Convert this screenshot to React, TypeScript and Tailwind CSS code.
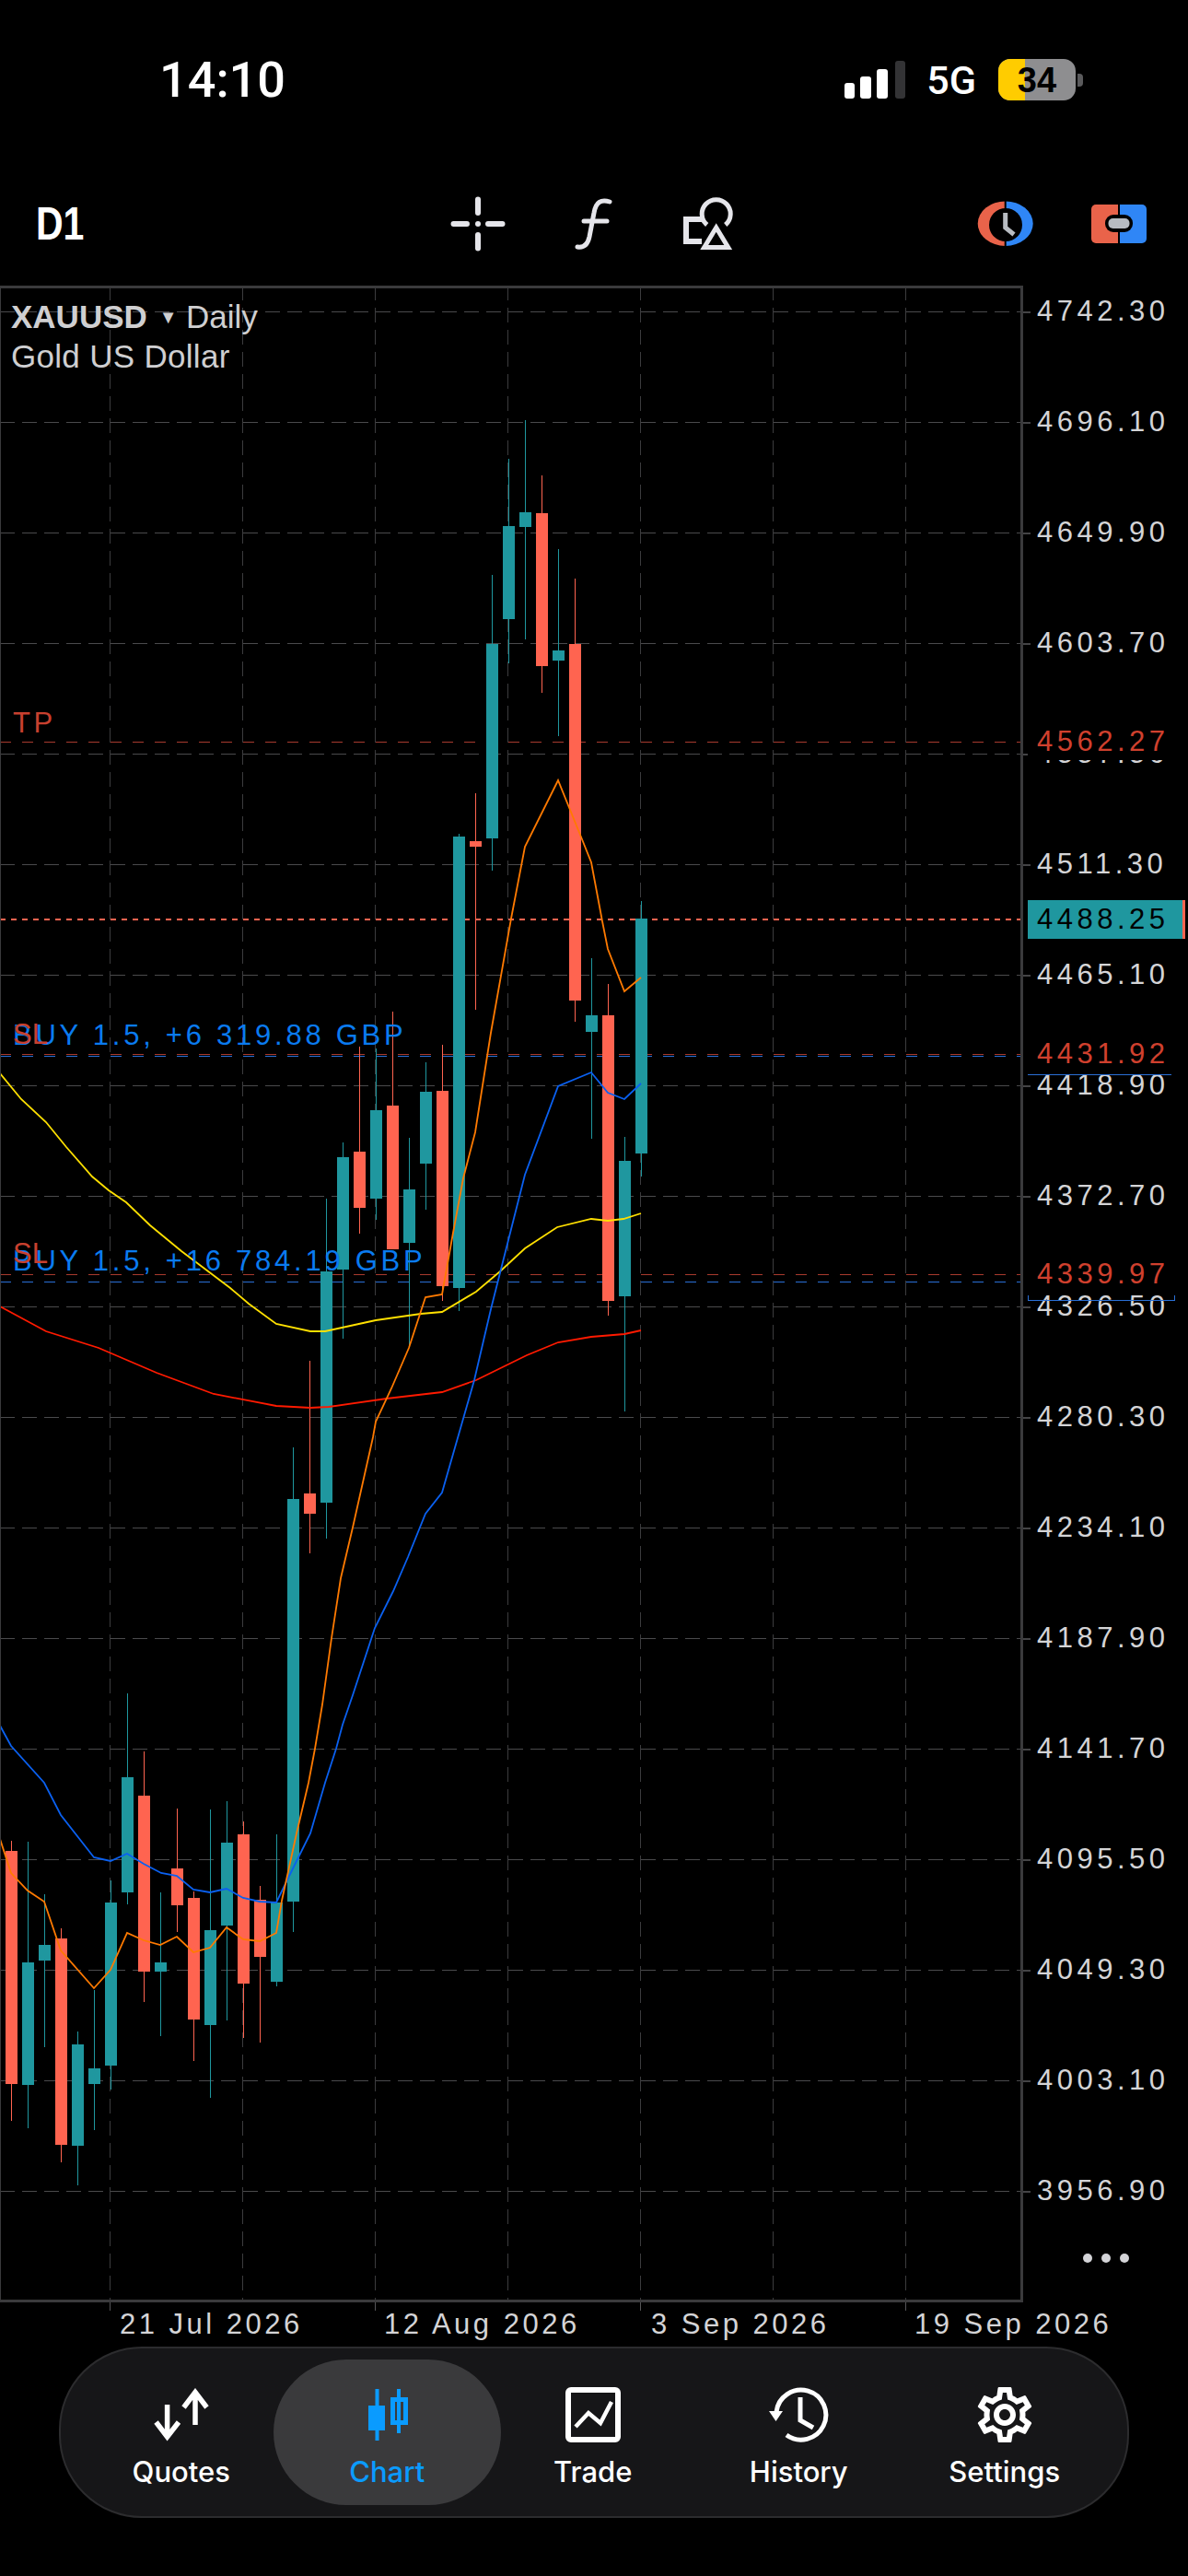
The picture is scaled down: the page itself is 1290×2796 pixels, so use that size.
import React from 'react';
import { MdOutlineSettings } from 'react-icons/md';

// all chart coordinates are page pixels; the plot starts at y = 310
const TOP = 310;
const TEAL = '#1f979f';
const RED = '#ff6450';

const PRICES = ['4742.30', '4696.10', '4649.90', '4603.70', '4557.50', '4511.30', '4465.10', '4418.90', '4372.70', '4326.50', '4280.30', '4234.10', '4187.90', '4141.70', '4095.50', '4049.30', '4003.10', '3956.90'];
const TIME_TICKS = [119, 407, 695, 983];
const GRID_X = [119, 263, 407, 551, 695, 839, 983];

// wick top, body top, body bottom, wick bottom, up
const CANDLES: [number, number, number, number, boolean][] = [
  [1998, 2009, 2262, 2302, false],
  [1999, 2130, 2263, 2310, true],
  [2056, 2111, 2128, 2222, true],
  [2093, 2104, 2328, 2347, false],
  [2205, 2219, 2329, 2372, true],
  [2160, 2245, 2262, 2312, true],
  [2041, 2065, 2242, 2268, true],
  [1838, 1929, 2054, 2067, true],
  [1901, 1949, 2140, 2173, false],
  [2054, 2130, 2140, 2210, true],
  [1963, 2028, 2068, 2097, false],
  [2053, 2060, 2192, 2237, false],
  [1964, 2095, 2198, 2277, true],
  [1955, 2000, 2090, 2193, true],
  [1977, 1991, 2153, 2212, false],
  [2047, 2062, 2124, 2217, false],
  [1991, 2065, 2151, 2156, true],
  [1571, 1627, 2064, 2097, true],
  [1477, 1621, 1643, 1686, false],
  [1301, 1380, 1631, 1670, true],
  [1240, 1256, 1378, 1453, true],
  [1136, 1250, 1311, 1339, false],
  [1138, 1205, 1301, 1324, true],
  [1098, 1200, 1356, 1356, false],
  [1235, 1291, 1349, 1461, true],
  [1153, 1185, 1263, 1313, true],
  [1134, 1184, 1396, 1412, false],
  [905, 908, 1398, 1423, true],
  [861, 913, 919, 1096, false],
  [624, 699, 910, 945, true],
  [498, 571, 672, 720, true],
  [456, 556, 572, 694, true],
  [516, 557, 723, 752, false],
  [596, 706, 717, 799, true],
  [628, 699, 1086, 1109, false],
  [1040, 1102, 1120, 1236, true],
  [1068, 1102, 1412, 1428, false],
  [1234, 1260, 1407, 1532, true],
  [978, 997, 1252, 1277, true],
];

const ORANGE_MA = '0,1996 12,2033 30,2052 48,2064 66,2117 102,2158 120,2138 138,2098 156,2106 174,2111 192,2102 210,2119 228,2114 246,2092 264,2105 282,2107 300,2098 306,2063 322,1990 335,1935 342,1898 350,1850 360,1778 370,1713 383,1658 405,1560 408,1543 425,1507 444,1463 462,1408 480,1405 492,1338 503,1279 516,1229 533,1121 555,997 570,919 606,847 632,911 642,936 654,1000 660,1030 678,1076 696,1061';
const BLUE_MA = '0,1873 12,1895 48,1935 66,1970 102,2016 120,2020 138,2012 156,2023 175,2033 192,2036 210,2051 228,2054 246,2050 264,2060 282,2064 300,2065 322,2020 337,1990 353,1935 365,1898 372,1872 383,1840 407,1767 427,1727 443,1690 462,1643 480,1620 515,1498 533,1421 570,1275 606,1179 642,1164 660,1186 678,1193 696,1176';
const YELLOW_MA = '0,1165 23,1193 50,1218 72,1245 100,1277 118,1292 137,1305 163,1330 197,1358 250,1398 270,1415 300,1437 337,1445 353,1445 408,1433 457,1426 480,1424 517,1402 543,1380 570,1355 605,1332 642,1323 660,1325 677,1323 696,1317';
const RED_MA = '0,1418 50,1445 107,1463 170,1490 232,1513 300,1526 337,1528 357,1527 420,1518 480,1511 517,1498 572,1471 606,1457 642,1451 678,1448 696,1444';

const StatusBar = () => (
  <div className="flex h-[176px] shrink-0 items-start justify-between pl-[173px] pr-[114px] pt-[60px] text-white">
    <span className="font-['Roboto',sans-serif] text-[54px] leading-[54px] font-medium">14:10</span>
    <div className="flex items-center pt-[4px]">
      <div className="flex h-[41px] items-end gap-[6px]">
        <div className="h-[17px] w-[11px] rounded-[3px] bg-white" />
        <div className="h-[24px] w-[12px] rounded-[3px] bg-white" />
        <div className="h-[32px] w-[12px] rounded-[3px] bg-white" />
        <div className="ml-[2px] h-[41px] w-[11px] rounded-[3px] bg-[#333335]" />
      </div>
      <span className="ml-[23px] font-['Roboto',sans-serif] text-[43px] leading-[44px] font-medium">5G</span>
      <div className="relative ml-[24px] flex h-[45px] w-[84px] items-center justify-center overflow-hidden rounded-[13px] bg-[#8e8e90]">
        <div className="absolute inset-y-0 left-0 w-[29px] bg-[#ffcc00]" />
        <span className="relative text-[38px] leading-[40px] font-bold text-black">34</span>
      </div>
      <div className="ml-[2px] h-[14px] w-[6px] rounded-r-[4px] bg-[#5a5a5c]" />
    </div>
  </div>
);

const Toolbar = () => (
  <div className="relative flex h-[134px] shrink-0 items-center text-[#e5e5ea]">
    <span className="ml-[39px] w-[449px] origin-left scale-x-[0.82] text-[50px] leading-[50px] font-bold text-white">D1</span>
    <svg width="62" height="62" viewBox="0 0 62 62" className="shrink-0" stroke="#e5e5ea" strokeWidth="6" strokeLinecap="round" fill="none">
      <path d="M4.5 31H19M42 31H57.5M31 4.5V19M31 43V57.5" />
      <circle cx="31" cy="31" r="3" fill="#e5e5ea" stroke="none" />
    </svg>
    <svg width="50" height="64" viewBox="0 0 50 64" className="ml-[70px] shrink-0" stroke="#e5e5ea" strokeWidth="5" strokeLinecap="round" fill="none">
      <path d="M42 8C33 5 27 8 25 20L20 46C18 55 13 58 7 57" />
      <path d="M14 29H39" />
    </svg>
    <svg width="60" height="64" viewBox="0 0 60 64" className="ml-[70px] shrink-0" stroke="#e5e5ea" fill="none">
      <path d="M22 27H5V51H22" strokeWidth="6" />
      <path d="M27.7 33A15.5 15.5 0 1 1 47.7 33" strokeWidth="5" />
      <path d="M37.7 36L50.7 57.5H24.7Z" strokeWidth="5" />
    </svg>
    <svg width="64" height="54" viewBox="0 0 64 54" className="ml-[260px] shrink-0">
      <path d="M31.7 2.5A30 24.2 0 0 0 31.7 50.9Z" fill="#e9634a" />
      <path d="M31.7 2.5A30 24.2 0 0 1 31.7 50.9Z" fill="#2f86f6" />
      <circle cx="32" cy="28" r="18" fill="#000" />
      <rect x="30.7" y="0" width="2" height="54" fill="#000" />
      <path d="M31.7 15V31L41 38.5" fill="none" stroke="#b8bcc2" strokeWidth="5" />
    </svg>
    <svg width="60" height="42" viewBox="0 0 60 42" className="ml-[61px] shrink-0">
      <path d="M30 0H5A5 5 0 0 0 0 5V37A5 5 0 0 0 5 42H30Z" fill="#e9634a" />
      <path d="M30 0H55A5 5 0 0 1 60 5V37A5 5 0 0 1 55 42H30Z" fill="#2f86f6" />
      <rect x="29" y="0" width="2" height="42" fill="#000" />
      <rect x="15" y="11" width="30" height="19" rx="9" fill="#000" />
      <rect x="18.5" y="15" width="23" height="11" rx="5" fill="#b8bcc2" />
    </svg>
  </div>
);

const Plot = () => (
  <svg className="absolute inset-0" width="1111" height="2189" viewBox={`0 ${TOP} 1111 2189`} fill="none">
    {PRICES.map((p, i) => (
      <line key={p} x1="0" x2="1110" y1={338.5 + i * 120} y2={338.5 + i * 120} stroke="#4a4a4c" strokeWidth="1" strokeDasharray="16 8" />
    ))}
    {GRID_X.map((x) => (
      <line key={x} x1={x + 0.5} x2={x + 0.5} y1={TOP} y2={2499} stroke="#3c3c3e" strokeWidth="1" strokeDasharray="16 8" />
    ))}

    {/* order and stop levels */}
    <line x1="0" x2="1110" y1="805.5" y2="805.5" stroke="#a83a2e" strokeDasharray="12 12" />
    <line x1="0" x2="1110" y1="1144.5" y2="1144.5" stroke="#a83a2e" strokeDasharray="12 12" />
    <line x1="0" x2="1110" y1="1146.5" y2="1146.5" stroke="#2a6fd6" strokeDasharray="12 12" />
    <line x1="0" x2="1110" y1="1383.5" y2="1383.5" stroke="#a83a2e" strokeDasharray="12 12" />
    <line x1="0" x2="1110" y1="1391.5" y2="1391.5" stroke="#2a6fd6" strokeDasharray="12 12" />
    <line x1="0" x2="1110" y1="998" y2="998" stroke={RED} strokeWidth="2" strokeDasharray="6 6" />

    {CANDLES.map(([high, top, bottom, low, up], i) => (
      <g key={i} fill={up ? TEAL : RED}>
        <rect x={12 + i * 18} y={high} width="1" height={low - high} />
        <rect x={6 + i * 18} y={top} width="13" height={bottom - top} />
      </g>
    ))}

    <polyline points={RED_MA} stroke="#ff1a00" strokeWidth="1.8" />
    <polyline points={YELLOW_MA} stroke="#ffe000" strokeWidth="1.8" />
    <polyline points={BLUE_MA} stroke="#0a60f0" strokeWidth="1.8" />
    <polyline points={ORANGE_MA} stroke="#ff7a00" strokeWidth="1.8" />
  </svg>
);

const ChartLabel = ({ y, className, children }: { y: number; className: string; children: React.ReactNode }) => (
  <span className={`absolute left-[14px] -translate-y-1/2 text-[31px] leading-[36px] whitespace-nowrap ${className}`} style={{ top: y - TOP }}>
    {children}
  </span>
);

const Chart = () => (
  <div className="relative h-[2189px] w-[1111px] shrink-0 overflow-hidden">
    <Plot />
    <div className="absolute inset-0 border-y-[3px] border-r-[3px] border-l border-[#3a3a3c]" />
    <div className="absolute left-[12px] top-[12px] text-[35px] leading-[43px] tracking-[0.3px] text-[#cfcfd1]">
      <div className="flex items-center">
        <span className="font-bold tracking-normal">XAUUSD</span>
        <span className="ml-[13px] mr-[9px] text-[20px] leading-[30px]">▼</span>
        <span className="tracking-normal">Daily</span>
      </div>
      <div>Gold US Dollar</div>
    </div>
    <ChartLabel y={785} className="tracking-[3.5px] text-[#c8402f]">TP</ChartLabel>
    <ChartLabel y={1124} className="tracking-[3.75px] text-[#0a7bf0]">BUY 1.5, +6 319.88 GBP</ChartLabel>
    <ChartLabel y={1123} className="text-[#c8402f]">SL</ChartLabel>
    <ChartLabel y={1369} className="tracking-[3.75px] text-[#0a7bf0]">BUY 1.5, +16 784.19 GBP</ChartLabel>
    <ChartLabel y={1361} className="text-[#c8402f]">SL</ChartLabel>
  </div>
);

const AxisLabel = ({ y, className, children }: { y: number; className: string; children: string }) => (
  <span className={`absolute left-[15px] -translate-y-1/2 text-[31px] leading-[36px] tracking-[4.5px] ${className}`} style={{ top: y - TOP }}>
    {children}
  </span>
);

const PriceAxis = () => (
  <div className="relative h-[2189px] flex-1">
    {PRICES.map((p, i) => (
      <React.Fragment key={p}>
        <div className="absolute left-0 h-[2px] w-[8px] bg-[#444446]" style={{ top: 338 + i * 120 - TOP }} />
        <AxisLabel y={338 + i * 120} className="text-[#d4d4d6]">{p}</AxisLabel>
      </React.Fragment>
    ))}

    {/* level tags sit on top of the regular scale */}
    <div className="absolute left-[5px] h-[40px] w-[160px] bg-black" style={{ top: 785 - TOP }} />
    <AxisLabel y={805} className="text-[#d0402e]">4562.27</AxisLabel>

    <div className="absolute left-[5px] h-[41px] w-[156px] border-b border-[#2a6fd6] bg-black" style={{ top: 1126 - TOP }} />
    <AxisLabel y={1144} className="text-[#d0402e]">4431.92</AxisLabel>

    <div className="absolute left-[5px] h-[41px] w-[160px] bg-black" style={{ top: 1364 - TOP }} />
    <div className="absolute left-[5px] h-[6px] w-[160px] border-x border-b border-[#2a6fd6]" style={{ top: 1406 - TOP }} />
    <AxisLabel y={1383} className="text-[#d0402e]">4339.97</AxisLabel>

    <div className="absolute left-[5px] flex h-[42px] w-[171px] items-center border-r-[3px] border-[#ff6450] bg-[#1f979f]" style={{ top: 977 - TOP }}>
      <span className="pl-[10px] text-[31px] leading-[36px] tracking-[4.5px] text-black">4488.25</span>
    </div>

    <div className="absolute left-[65px] top-[2136px] flex gap-[10px]">
      <div className="h-[10px] w-[10px] rounded-full bg-[#d4d4d8]" />
      <div className="h-[10px] w-[10px] rounded-full bg-[#d4d4d8]" />
      <div className="h-[10px] w-[10px] rounded-full bg-[#d4d4d8]" />
    </div>
  </div>
);

const TimeAxis = () => (
  <div className="relative h-[48px] shrink-0 text-[31px] leading-[48px] tracking-[3.5px] text-[#d4d4d6]">
    {TIME_TICKS.map((x) => (
      <div key={x} className="absolute top-0 h-[9px] w-[1px] bg-[#555557]" style={{ left: x }} />
    ))}
    <span className="absolute left-[130px] whitespace-nowrap">21 Jul 2026</span>
    <span className="absolute left-[417px] whitespace-nowrap">12 Aug 2026</span>
    <span className="absolute left-[707px] whitespace-nowrap">3 Sep 2026</span>
    <span className="absolute left-[993px] whitespace-nowrap">19 Sep 2026</span>
  </div>
);

const NavItem = ({ label, active, children }: { label: string; active?: boolean; children: React.ReactNode }) => (
  <div className={`relative flex w-[223.5px] flex-col items-center pt-[41px] ${active ? 'text-[#0a9bff]' : 'text-white'}`}>
    {active && <div className="absolute -inset-x-[11.5px] inset-y-[12px] rounded-[80px] bg-[#3a3a3c]" />}
    <div className="relative flex h-[62px] items-center justify-center">{children}</div>
    <span className="relative mt-[11px] font-['Inter',sans-serif] text-[31px] leading-[40px] font-medium">{label}</span>
  </div>
);

const BottomNav = () => (
  <div className="ml-[64px] flex h-[186px] w-[1162px] shrink-0 rounded-[90px] border-2 border-[#2c2c2e] bg-[#161618] pl-[19px]">
    <NavItem label="Quotes">
      <svg width="66" height="58" viewBox="0 0 66 58" fill="none" stroke="currentColor" strokeWidth="5.5">
        <path d="M17.6 18V52M5.5 37L17.6 53L30 37" />
        <path d="M48 40V5M35.5 21L48 4.5L60.5 21" />
      </svg>
    </NavItem>
    <NavItem label="Chart" active>
      <svg width="46" height="56" viewBox="0 0 46 56" className="ml-[6px]" fill="currentColor">
        <rect x="7.5" y="0" width="4" height="56" />
        <rect x="0" y="18" width="18" height="27" />
        <rect x="31" y="0" width="4" height="48" />
        <path fillRule="evenodd" d="M24 9H43V39H24ZM29 14V34H38V14Z" />
      </svg>
    </NavItem>
    <NavItem label="Trade">
      <svg width="60" height="60" viewBox="0 0 60 60" fill="none" stroke="currentColor">
        <rect x="3" y="3" width="54" height="54" rx="3" strokeWidth="6" />
        <path d="M11 43L25 28L38 39L50 16" strokeWidth="4.5" />
      </svg>
    </NavItem>
    <NavItem label="History">
      <svg width="66" height="60" viewBox="0 0 66 60" fill="none" stroke="currentColor" strokeWidth="5">
        <path d="M9 27A27 27 0 1 1 20 52" />
        <path d="M35 11V36L49 44" />
        <path d="M1 26H16L8.5 37Z" fill="currentColor" stroke="none" />
      </svg>
    </NavItem>
    <NavItem label="Settings">
      <MdOutlineSettings size={72} />
    </NavItem>
  </div>
);

export default function App() {
  return (
    <div className="flex h-[2796px] w-[1290px] flex-col overflow-hidden bg-black font-['Liberation_Sans',Arial,sans-serif]">
      <StatusBar />
      <Toolbar />
      <div className="flex shrink-0">
        <Chart />
        <PriceAxis />
      </div>
      <TimeAxis />
      <BottomNav />
    </div>
  );
}
